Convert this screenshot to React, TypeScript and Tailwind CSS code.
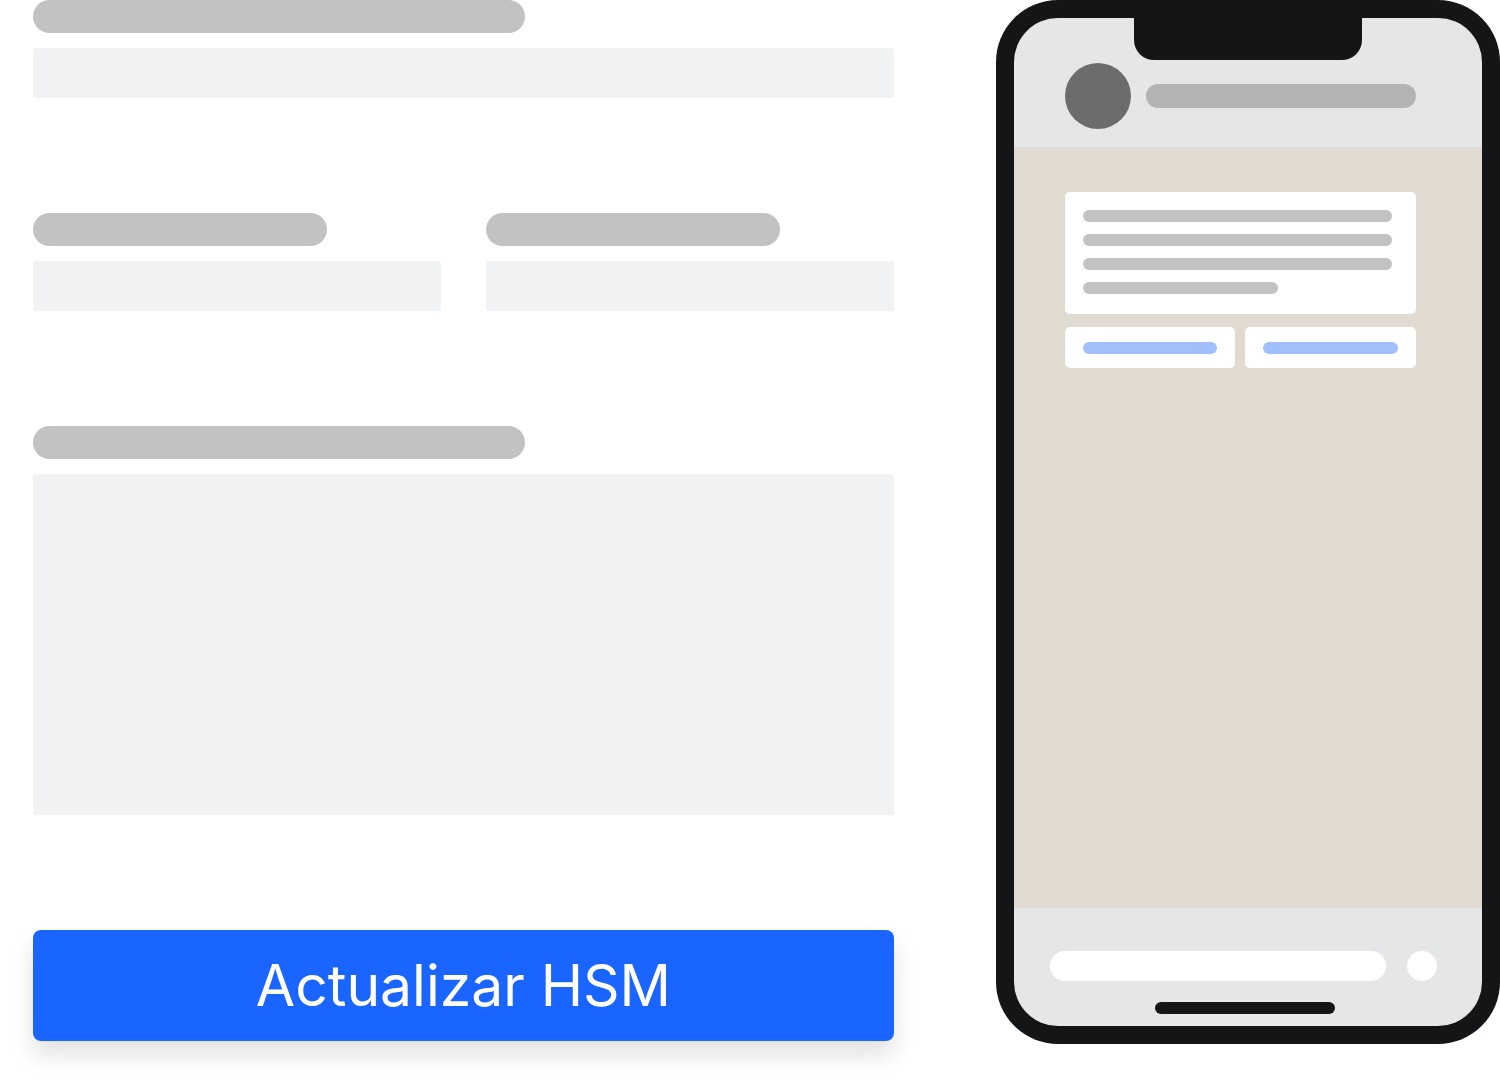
import React from "react";

const Label = ({ w }: { w: string }) => <div className={`h-[33px] rounded-full bg-[#c1c2c1] ${w}`} />;

const Field = ({ h = "h-[50px]" }: { h?: string }) => (
  <div className={`mt-[15px] w-full rounded-[3px] bg-[#f1f2f3] ${h}`} />
);

const Phone = () => (
  <div className="relative h-[1044px] w-[504px] rounded-[62px] bg-[#141516] p-[18px]">
    <div className="relative flex h-full w-full flex-col overflow-hidden rounded-[44px] bg-[#e5e6e8]">
      {/* notch */}
      <div className="absolute left-[120px] top-0 h-[42px] w-[228px] rounded-b-[20px] bg-[#141516]" />
      <div className="flex h-[129px] shrink-0 items-center gap-[15px] pl-[51px] pt-[27px]">
        <div className="h-[66px] w-[66px] rounded-full bg-[#6b6c6e]" />
        <div className="h-[24px] w-[270px] rounded-full bg-[#b2b3b4]" />
      </div>
      <div className="flex flex-1 flex-col bg-[#e1dad1] px-[51px] pt-[45px]">
        <div className="flex w-[351px] flex-col gap-[12px] rounded-[5px] bg-white px-[18px] py-[18px] pb-[20px]">
          <div className="h-[12px] w-[309px] rounded-full bg-[#c1c2c1]" />
          <div className="h-[12px] w-[309px] rounded-full bg-[#c1c2c1]" />
          <div className="h-[12px] w-[309px] rounded-full bg-[#c1c2c1]" />
          <div className="h-[12px] w-[195px] rounded-full bg-[#c1c2c1]" />
        </div>
        <div className="mt-[13px] flex w-[351px] gap-[10px]">
          <div className="flex h-[41px] w-[170px] items-center rounded-[5px] bg-white px-[18px]">
            <div className="h-[12px] w-[135px] rounded-full bg-[#a1c0fb]" />
          </div>
          <div className="flex h-[41px] w-[171px] items-center rounded-[5px] bg-white px-[18px]">
            <div className="h-[12px] w-[135px] rounded-full bg-[#a1c0fb]" />
          </div>
        </div>
      </div>
      <div className="flex h-[118px] shrink-0 flex-col items-center">
        <div className="mt-[43px] flex w-full items-center gap-[21px] pl-[36px]">
          <div className="h-[30px] w-[336px] rounded-full bg-white" />
          <div className="h-[30px] w-[30px] rounded-full bg-white" />
        </div>
        <div className="mr-[6px] mt-[21px] h-[12px] w-[180px] rounded-full bg-[#141516]" />
      </div>
    </div>
  </div>
);

export default function App() {
  return (
    <div className="flex h-[1092px] w-[1500px] gap-[102px] bg-white pl-[33px]">
      <div className="flex w-[861px] flex-col">
        <Label w="w-[492px]" />
        <Field />
        <div className="mt-[115px] flex gap-[45px]">
          <div className="flex w-[408px] flex-col">
            <Label w="w-[294px]" />
            <Field />
          </div>
          <div className="flex w-[408px] flex-col">
            <Label w="w-[294px]" />
            <Field />
          </div>
        </div>
        <div className="mt-[115px]">
          <Label w="w-[492px]" />
        </div>
        <Field h="h-[341px]" />
        <button className="mt-[115px] flex h-[111px] w-full items-center justify-center rounded-[8px] bg-[#1a64ff] text-[57px] text-white shadow-[0_14px_24px_rgba(0,0,0,0.12)] [font-family:Inter,'Noto_Sans',sans-serif]">
          Actualizar HSM
        </button>
      </div>
      <Phone />
    </div>
  );
}
